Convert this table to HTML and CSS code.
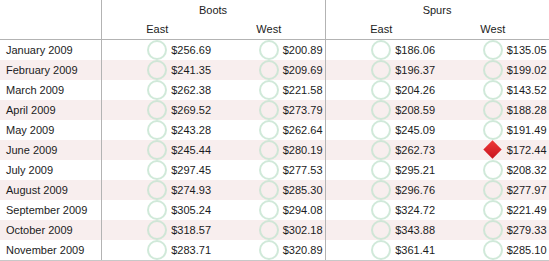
FILE: index.html
```html
<!DOCTYPE html>
<html lang="en">
<head>
    <meta charset="UTF-8">
    <title>Sales by Region</title>
    <link rel="stylesheet" href="styles.css">
</head>
<body>
    <table class="sales-table">
        <colgroup>
            <col class="col-label">
            <col class="col-value">
            <col class="col-value group-end">
            <col class="col-value">
            <col class="col-value group-end">
        </colgroup>
        <thead>
            <tr class="group-row">
                <th class="corner" rowspan="2"></th>
                <th class="group-end" colspan="2">Boots</th>
                <th class="group-end" colspan="2">Spurs</th>
            </tr>
            <tr class="region-row">
                <th>East</th>
                <th class="group-end">West</th>
                <th>East</th>
                <th class="group-end">West</th>
            </tr>
        </thead>
        <tbody id="rows">
            <!-- rows are generated here -->
        </tbody>
    </table>

    <script>
        // Monthly sales: boots east, boots west, spurs east, spurs west
        const sales = [
            ['January 2009', 256.69, 200.89, 186.06, 135.05],
            ['February 2009', 241.35, 209.69, 196.37, 199.02],
            ['March 2009', 262.38, 221.58, 204.26, 143.52],
            ['April 2009', 269.52, 273.79, 208.59, 188.28],
            ['May 2009', 243.28, 262.64, 245.09, 191.49],
            ['June 2009', 245.44, 280.19, 262.73, 172.44],
            ['July 2009', 297.45, 277.53, 295.21, 208.32],
            ['August 2009', 274.93, 285.30, 296.76, 277.97],
            ['September 2009', 305.24, 294.08, 324.72, 221.49],
            ['October 2009', 318.57, 302.18, 343.88, 279.33],
            ['November 2009', 283.71, 320.89, 361.41, 285.10]
        ];

        const threshold = 180;

        const rowsElement = document.getElementById('rows');

        sales.forEach((row, i) => {
            const tr = document.createElement('tr');
            if (i % 2 === 1) tr.className = 'alt';

            const label = document.createElement('td');
            label.className = 'label';
            label.textContent = row[0];
            tr.appendChild(label);

            row.slice(1).forEach((value, j) => {
                const td = document.createElement('td');
                if (j % 2 === 1) td.classList.add('group-end');

                const cell = document.createElement('div');
                cell.className = 'cell';

                const marker = document.createElement('span');
                // only the spurs west dip in june is flagged
                marker.className = (i === 5 && j === 3 && value < threshold) ? 'marker alert' : 'marker';

                const amount = document.createElement('span');
                amount.className = 'amount';
                amount.textContent = '$' + value.toFixed(2);

                cell.appendChild(marker);
                cell.appendChild(amount);
                td.appendChild(cell);
                tr.appendChild(td);
            });

            rowsElement.appendChild(tr);
        });
    </script>
</body>
</html>
```

FILE: styles.css
```css
* {
    margin: 0;
    padding: 0;
    box-sizing: border-box;
}

body {
    font-family: 'Liberation Sans', Arial, sans-serif;
    font-size: 11px;
    color: #1b1b22;
    background: white;
}

.sales-table {
    border-collapse: collapse;
    table-layout: fixed;
    width: 549px;
}

.col-label {
    width: 101px;
}

.col-value {
    width: 112px;
}

.sales-table th,
.sales-table td {
    padding: 0;
    height: 20px;
    font-weight: normal;
}

.sales-table th {
    text-align: center;
    vertical-align: middle;
}

.sales-table .region-row th {
    height: 19px;
    vertical-align: top;
    padding-top: 3px;
}

.corner,
.label,
.group-end {
    border-right: 1px solid #b3b3b3;
}

.region-row th,
.corner {
    border-bottom: 1px solid #b3b3b3;
}

.sales-table tbody tr:last-child td {
    border-bottom: 1px solid #c8c8c8;
}

.alt td {
    background: #f8eeee;
}

.sales-table .label {
    padding-left: 6px;
    white-space: nowrap;
}

.cell {
    display: flex;
    justify-content: flex-end;
    align-items: center;
    gap: 4px;
    padding-right: 2px;
    height: 20px;
}

.marker {
    width: 20px;
    height: 20px;
    border: 2.5px solid rgba(196, 228, 208, 0.8);
    border-radius: 50%;
    flex-shrink: 0;
}

.marker.alert {
    border: none;
    border-radius: 0;
    position: relative;
}

.marker.alert::after {
    content: '';
    position: absolute;
    left: 3px;
    top: 3px;
    width: 13px;
    height: 13px;
    transform: rotate(45deg);
    background: linear-gradient(135deg, #ee3a3a 0%, #c8141e 100%);
}

.amount {
    white-space: nowrap;
}
```
